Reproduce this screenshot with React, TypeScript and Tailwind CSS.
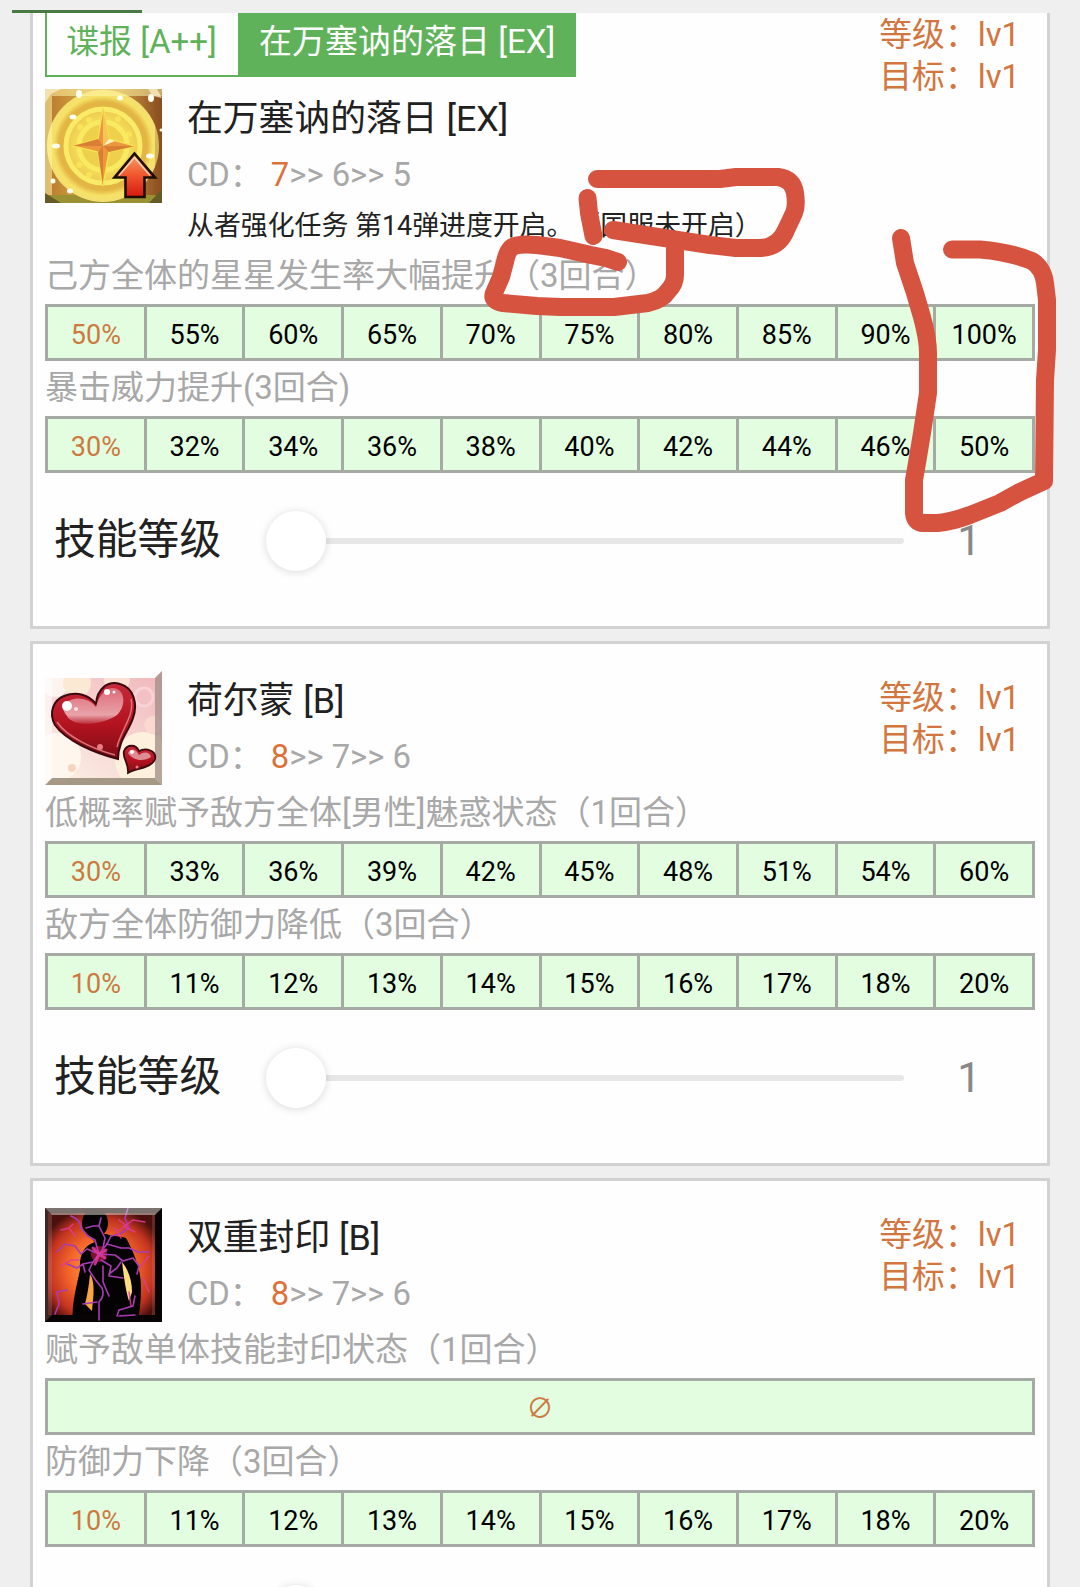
import type { ReactNode } from 'react';

type Effect = { text: string; values: string[] };

type Skill = {
  name: string;
  cd: string[];
  note?: string;
  icon: ReactNode;
  effects: Effect[];
};

function StarIcon() {
  return (
    <svg viewBox="0 0 117 114" preserveAspectRatio="none" className="block h-[114px] w-[117px] shrink-0">
      <defs>
        <radialGradient id="gold" cx="50%" cy="50%" r="60%">
          <stop offset="0" stopColor="#fff27a" />
          <stop offset="0.6" stopColor="#f4da58" />
          <stop offset="1" stopColor="#e6bd48" />
        </radialGradient>
        <linearGradient id="arrow" x1="0" y1="0" x2="0" y2="1">
          <stop offset="0" stopColor="#f9a573" />
          <stop offset="0.5" stopColor="#f0562c" />
          <stop offset="1" stopColor="#d6190f" />
        </linearGradient>
        <linearGradient id="corner" x1="0" y1="0" x2="1" y2="0">
          <stop offset="0" stopColor="#b8782d" />
          <stop offset="0.5" stopColor="#e2b84c" />
          <stop offset="1" stopColor="#8a4a20" />
        </linearGradient>
        <radialGradient id="outer" gradientUnits="userSpaceOnUse" cx="58" cy="57" r="58">
          <stop offset="0.76" stopColor="#e3b545" />
          <stop offset="0.86" stopColor="#f6e266" />
          <stop offset="0.96" stopColor="#f3df72" />
          <stop offset="1" stopColor="#cfa83c" />
        </radialGradient>
      </defs>
      <rect width="117" height="114" fill="url(#corner)" />
      <rect y="106" width="117" height="8" fill="#9a9232" />
      <ellipse cx="58" cy="57" rx="56" ry="56" fill="url(#outer)" />
      <circle cx="58" cy="57" r="37" fill="url(#gold)" stroke="#f9ea68" strokeWidth="5" />
      <circle cx="58" cy="57" r="24" fill="#efd04c" stroke="#f9ea62" strokeWidth="5" />
      <g fill="#ffee5a" opacity="0.6">
        <circle cx="35" cy="38" r="3" />
        <circle cx="44" cy="31" r="3" />
        <circle cx="73" cy="30" r="3" />
        <circle cx="84" cy="45" r="3" />
        <circle cx="34" cy="76" r="3" />
        <circle cx="44" cy="86" r="3" />
      </g>
      <path d="M58 19 L64 50 L90 57 L64 63 L58 97 L53 63 L28 57 L53 50 Z" fill="#ec963d" stroke="#f6e250" strokeWidth="1.5" />
      <path d="M58 19 L64 50 L58 57 Z" fill="#f6c556" />
      <path d="M90 57 L64 63 L58 57 Z M58 97 L53 63 L58 57 Z M28 57 L53 50 L58 57 Z" fill="#d97e35" />
      <path d="M58 57 L64 50 L70 52 Z" fill="#fff3c0" />
      <path d="M0 0 H117 V7 H0 Z M0 0 H7 V106 H0 Z" fill="#fff6a8" opacity="0.55" />
      <path d="M110 7 H117 V114 H110 Z" fill="#8c5a20" opacity="0.3" />
      <path d="M0 0 H16 L6 5 L0 14 Z M103 0 H112 L117 9 L108 7 Z" fill="#f8eac0" opacity="0.8" />
      <path d="M0 104 L16 114 H0 Z M117 100 L104 114 H117 Z" fill="#665b28" />
      <g fill="#fffef0">
        <ellipse cx="28" cy="28" rx="3.5" ry="2.5" />
        <ellipse cx="11" cy="57" rx="4" ry="2.5" />
        <ellipse cx="8" cy="92" rx="2.5" ry="2.5" />
        <ellipse cx="25" cy="102" rx="3" ry="2.5" />
        <ellipse cx="105" cy="67" rx="4" ry="2.5" />
        <ellipse cx="75" cy="9" rx="3" ry="2.5" />
        <ellipse cx="34" cy="5" rx="3" ry="4" />
        <ellipse cx="106" cy="9" rx="3" ry="4" />
        <circle cx="116" cy="41" r="1.5" />
      </g>
      <path d="M89.500 64.500 L110 88.500 H99.500 V108 H80.500 V88.500 H69.500 Z" fill="url(#arrow)" stroke="#1c0d05" strokeWidth="2.600" />
      <path d="M89.500 68.500 L105 86.500 M89.500 68.500 L74 86.500" stroke="#fbd9b8" strokeWidth="1.300" fill="none" />
    </svg>
  );
}

function HeartIcon() {
  return (
    <svg viewBox="0 0 117 114" preserveAspectRatio="none" className="block h-[114px] w-[117px] shrink-0">
      <defs>
        <linearGradient id="heart" x1="0" y1="0" x2="0" y2="1">
          <stop offset="0" stopColor="#c62a3a" />
          <stop offset="0.55" stopColor="#b3131f" />
          <stop offset="1" stopColor="#7c0d15" />
        </linearGradient>
        <linearGradient id="gloss" x1="0" y1="0" x2="0" y2="1">
          <stop offset="0" stopColor="#dc6a78" />
          <stop offset="0.75" stopColor="#e9a2a8" />
          <stop offset="1" stopColor="#bd2f3d" />
        </linearGradient>
        <linearGradient id="pink" x1="1" y1="0" x2="0.2" y2="1">
          <stop offset="0" stopColor="#f0b6ba" />
          <stop offset="0.6" stopColor="#f8d9d6" />
          <stop offset="1" stopColor="#fbeee2" />
        </linearGradient>
      </defs>
      <path d="M0 7 H109 L117 0 V114 H0 Z" fill="url(#pink)" />
      <circle cx="10" cy="13" r="13" fill="#fdf3ef" />
      <circle cx="32" cy="12" r="14" fill="#fbe9d4" />
      <circle cx="72" cy="8" r="13" fill="#fbe9d4" opacity="0.8" />
      <circle cx="12" cy="86" r="24" fill="#fff6ee" />
      <circle cx="98" cy="89" r="28" fill="#fdf0dc" />
      <circle cx="99" cy="26" r="9" fill="#f3c0c4" stroke="#f8d2d6" strokeWidth="3" />
      <circle cx="108" cy="54" r="9" fill="#f9d8cf" />
      <circle cx="27" cy="97" r="4" fill="#f5d5bf" />
      <path d="M0 0 H117 L110 7 H0 Z" fill="#fefefe" />
      <path d="M117 0 V114 L110 107 V7 Z" fill="#a5918b" opacity="0.8" />
      <path d="M0 114 L7 107 H110 L117 114 Z" fill="#9b8f7c" opacity="0.9" />
      <path d="M0 7 H7 V107 L0 114 Z" fill="#ffffff" opacity="0.6" />
      <path
        d="M73 88 C50 82 21 70 10 54 C3 41 9 29 19 25 C32 20 44 24 51 33 C52 18 63 9 75 13 C89 17 93 33 88 47 C84 60 73 70 73 88 Z"
        fill="url(#heart)"
        stroke="#3a0a10"
        strokeWidth="2"
      />
      <path d="M70 84 C48 78 22 66 12 51" stroke="#d9757c" strokeWidth="1.500" fill="none" />
      <path d="M86 28 C90 45 76 58 72 76" stroke="#d9757c" strokeWidth="1.500" fill="none" />
      <path
        d="M19 34 C25 25 43 25 51 36 C54 22 64 14 72 18 C81 22 80 37 72 44 C58 54 28 57 22 45 C19 41 17 38 19 34 Z"
        fill="url(#gloss)"
      />
      <circle cx="22" cy="35" r="5" fill="#fff" />
      <circle cx="31" cy="38" r="2" fill="#fbdfe2" />
      <circle cx="62" cy="21" r="3" fill="#fff" />
      <circle cx="69" cy="21" r="1.500" fill="#fff" />
      <circle cx="55" cy="76" r="3" fill="#e77f84" />
      <path
        d="M83 102 C84 92 77 87 79 80 C82 73 91 73 94 80 C101 76 112 80 110 88 C107 97 92 97 83 102 Z"
        fill="url(#heart)"
        stroke="#3a0a10"
        strokeWidth="1.800"
      />
      <path d="M83 82 C86 76 91 78 94 84 C99 80 105 81 106 86 C99 91 88 90 83 82 Z" fill="#e08c94" />
      <circle cx="87" cy="81" r="2" fill="#fff" />
      <circle cx="92" cy="96" r="1.500" fill="#e77f84" />
    </svg>
  );
}

function SealIcon() {
  return (
    <svg viewBox="0 0 117 114" preserveAspectRatio="none" className="block h-[114px] w-[117px] shrink-0">
      <defs>
        <radialGradient id="fire" cx="50%" cy="55%" r="62%">
          <stop offset="0" stopColor="#ffb54a" />
          <stop offset="0.5" stopColor="#f4642a" />
          <stop offset="0.8" stopColor="#c23320" />
          <stop offset="1" stopColor="#4a100d" />
        </radialGradient>
      </defs>
      <rect width="117" height="114" fill="#0c0405" />
      <rect x="3" y="5" width="107" height="102" fill="url(#fire)" />
      <ellipse cx="50" cy="15" rx="13" ry="15" fill="#050204" />
      <path
        d="M42 26 H62 C64 28 76 28 81 30 C88 42 96 62 96 78 C96 92 95 106 92 114 H28 C26 100 31 80 35 62 C34 48 38 38 50 34 Z"
        fill="#050204"
      />
      <path d="M45 66 C44 78 42 88 40 96 L47 103 C48 92 50 80 47 70 Z" fill="#f9a544" />
      <path d="M77 54 C79 70 81 84 84 93 L87 84 C87 72 83 61 77 54 Z" fill="#ffdc80" />
      <path d="M0 107 H117 V114 H0 Z M111 0 H117 V114 H111 Z" fill="#080304" />
      <circle cx="54" cy="46" r="8" fill="#e0245a" opacity="0.55" />
      <g stroke="#a83cb4" strokeWidth="1.600" fill="none" strokeLinejoin="round" strokeLinecap="round">
        <path d="M26 8 Q36 12 36 20 L43 28 L50 32 L54 46 L48 54 L44 62 Q50 72 57 80 Q60 88 54 94 L54 112" />
        <path d="M54 46 L62 36 L66 28 L75 26 L84 20 L80 10 L83 0" />
        <path d="M54 46 L70 47 L78 53 L88 50 L94 58 L92 66" />
        <path d="M54 46 L42 41 L36 46 L30 38 L20 36 L12 44" />
        <path d="M56 52 L66 58 L64 68 L78 70 M64 66 L72 60 L76 54" />
        <path d="M41 20 L48 18 L54 18 L56 10 M54 18 L60 30 L58 40" />
        <path d="M62 36 L76 40 L84 40 L93 44 L104 44" />
        <path d="M48 54 L38 56 L32 60 L22 56 M38 56 L40 64" />
        <path d="M10 106 L14 96 L12 84 L22 82" />
        <path d="M52 94 L38 96 M72 108 L74 102 L88 98 L90 88 M74 108 L90 107" />
        <path d="M58 58 L58 74 L64 88" />
      </g>
      <g stroke="#e23a9b" strokeWidth="1.500" fill="none" strokeLinecap="round" opacity="0.85">
        <path d="M72 24 L88 12 L100 14 M78 18 L90 24 M74 12 L82 18 M70 20 L76 30" />
        <path d="M16 22 L24 20 L30 28 M24 20 L28 16 M16 58 L26 52 L34 52" />
        <path d="M96 58 L104 48 M98 70 L104 84 M84 84 L86 98" />
        <path d="M54 46 L48 40 M54 46 L60 50 M54 46 L50 56 M54 46 L61 42" strokeWidth="3" />
      </g>
      <path d="M0 0 H117 L110 7 H7 Z" fill="#d8cfc9" opacity="0.55" />
      <path d="M0 0 L7 7 V107 L0 114 Z" fill="#b98a80" opacity="0.28" />
      <path d="M107 7 H110 V107 H107 Z" fill="#d78a70" opacity="0.2" />
    </svg>
  );
}

const skills: Skill[] = [
  {
    name: '在万塞讷的落日 [EX]',
    cd: ['7', '6', '5'],
    note: '从者强化任务 第14弹进度开启。（国服未开启）',
    icon: <StarIcon />,
    effects: [
      {
        text: '己方全体的星星发生率大幅提升（3回合）',
        values: ['50%', '55%', '60%', '65%', '70%', '75%', '80%', '85%', '90%', '100%'],
      },
      {
        text: '暴击威力提升(3回合)',
        values: ['30%', '32%', '34%', '36%', '38%', '40%', '42%', '44%', '46%', '50%'],
      },
    ],
  },
  {
    name: '荷尔蒙 [B]',
    cd: ['8', '7', '6'],
    icon: <HeartIcon />,
    effects: [
      {
        text: '低概率赋予敌方全体[男性]魅惑状态（1回合）',
        values: ['30%', '33%', '36%', '39%', '42%', '45%', '48%', '51%', '54%', '60%'],
      },
      {
        text: '敌方全体防御力降低（3回合）',
        values: ['10%', '11%', '12%', '13%', '14%', '15%', '16%', '17%', '18%', '20%'],
      },
    ],
  },
  {
    name: '双重封印 [B]',
    cd: ['8', '7', '6'],
    icon: <SealIcon />,
    effects: [
      { text: '赋予敌单体技能封印状态（1回合）', values: ['∅'] },
      {
        text: '防御力下降（3回合）',
        values: ['10%', '11%', '12%', '13%', '14%', '15%', '16%', '17%', '18%', '20%'],
      },
    ],
  },
];

function SkillHead({ skill }: { skill: Skill }) {
  return (
    <div className="flex">
      {skill.icon}
      <div className="ml-[25px] whitespace-nowrap">
        <h2 className="h-[58px] text-[35.8px] leading-[60px] text-[#212121]">{skill.name}</h2>
        <p className="h-[57px] text-[32.8px] leading-[57px] text-[#a8a8a8]">
          CD： <span className="text-[#d9733a]">{skill.cd[0]}</span>
          {`>> ${skill.cd[1]}>> ${skill.cd[2]}`}
        </p>
        {skill.note && <p className="h-[45px] text-[26.9px] leading-[45px] text-[#212121]">{skill.note}</p>}
      </div>
    </div>
  );
}

function LevelInfo() {
  return (
    <div className="mr-[15px] pt-px whitespace-nowrap text-[32.8px] leading-[42px] text-[#d2763f]">
      <p>等级：lv1</p>
      <p>目标：lv1</p>
    </div>
  );
}

function EffectRow({ effect }: { effect: Effect }) {
  return (
    <div>
      <p className="h-[55px] whitespace-nowrap text-[33px] leading-[54px] text-[#a8a8a8]">{effect.text}</p>
      <div className="flex h-[57px] border-y-[3px] border-l-[3px] border-[#a6aaa5] bg-[#e2fde0]">
        {effect.values.map((v, i) => (
          <div
            key={i}
            className={
              'flex flex-1 items-center justify-center border-r-[3px] border-[#a6aaa5] pt-[5px] text-[27px] ' +
              (i === 0 ? 'text-[#cc7a40]' : 'text-black')
            }
          >
            {v}
          </div>
        ))}
      </div>
    </div>
  );
}

function LevelSlider() {
  return (
    <div className="mt-[37px] flex h-[61px] items-center">
      <span className="mb-[2px] ml-[9px] w-[212px] text-[41.8px] leading-[42px] text-[#212121]">技能等级</span>
      <span className="z-10 h-[60px] w-[60px] rounded-full bg-white shadow-[0_1px_9px_rgba(0,0,0,0.15)]" />
      <span className="h-[6px] w-[578px] rounded-r-full bg-[#e7e7e7]" />
      <span className="w-[130px] text-center text-[42px] leading-[42px] text-[#888888]">1</span>
    </div>
  );
}

function SkillBody({ skill }: { skill: Skill }) {
  return (
    <>
      {skill.effects.map((e) => (
        <EffectRow key={e.text} effect={e} />
      ))}
      <LevelSlider />
    </>
  );
}

function SkillTabs() {
  return (
    <div className="mb-[12px] flex h-16 text-[33px] leading-[58px] whitespace-nowrap">
      <div className="w-[193px] border-b-2 border-l-2 border-[#60b25a] pl-[19px] text-[#60b25a]">谍报 [A++]</div>
      <div className="w-[338px] bg-[#60b25a] pl-[21px] text-white">在万塞讷的落日 [EX]</div>
    </div>
  );
}

// Hand drawn red marker lines over the page
function MarkerLines() {
  return (
    <svg
      viewBox="0 0 1080 1587"
      className="pointer-events-none absolute inset-0 z-20 h-[1587px] w-[1080px]"
      fill="none"
      stroke="#d65340"
      strokeWidth="18"
      strokeLinecap="round"
      strokeLinejoin="round"
    >
      <path d="M597 179 L720 179 L736 177 H778 Q793 179 795 193 Q797 206 794 213 L786 230 Q779 247 761 248 H736 L710 245 L671 239 L645 235 L613 230" />
      <path d="M587.500 198 L589 213 L593.500 236" />
      <path d="M618 262 L606 258 L591 255 L560 248 L537 245 Q516 243 511 248 Q507 252 505 262 L501 277 L494 293 Q491 301 503 303 L537 306 L560 307 H614 L648 303 Q662 300 668 291 Q675 284 675 275 V248" />
      <path d="M901 238 L905 263 L915 293 L922 317 Q928 339 928 353 V393 L922 433 L917 463 L914 480 V513 Q915 523 923 523 H938 Q951 522 970 515 L1000 503 L1020 492 L1044 481 L1045 380 L1047 350 V300 L1045 283 Q1043 268 1032 261 Q1010 252 980 249.500 H952" />
    </svg>
  );
}

export default function App() {
  const [first, ...rest] = skills;

  return (
    <div className="relative h-[1587px] w-[1080px] overflow-hidden bg-[#efefef] font-['Roboto','Noto_Sans_CJK_SC',sans-serif] [text-spacing-trim:space-all]">
      <div className="flex h-[13px] items-end pl-[12px]">
        <div className="h-[3px] w-[130px] bg-[#4a7a43]" />
      </div>

      <div className="ml-[30px] flex w-[1020px] flex-col gap-3">
        <section className="h-[616px] border-x-[3px] border-b-[3px] border-[#d2d2d2] bg-[#fefefe] px-[12px]">
          <div className="flex justify-between">
            <div>
              <SkillTabs />
              <SkillHead skill={first} />
            </div>
            <LevelInfo />
          </div>
          <SkillBody skill={first} />
        </section>

        {rest.map((skill) => (
          <section key={skill.name} className="h-[525px] border-[3px] border-[#d2d2d2] bg-[#fefefe] px-[12px] pt-[27px]">
            <div className="flex h-[115px] items-start justify-between">
              <SkillHead skill={skill} />
              <div className="pt-[5px]">
                <LevelInfo />
              </div>
            </div>
            <SkillBody skill={skill} />
          </section>
        ))}
      </div>

      <MarkerLines />
    </div>
  );
}
